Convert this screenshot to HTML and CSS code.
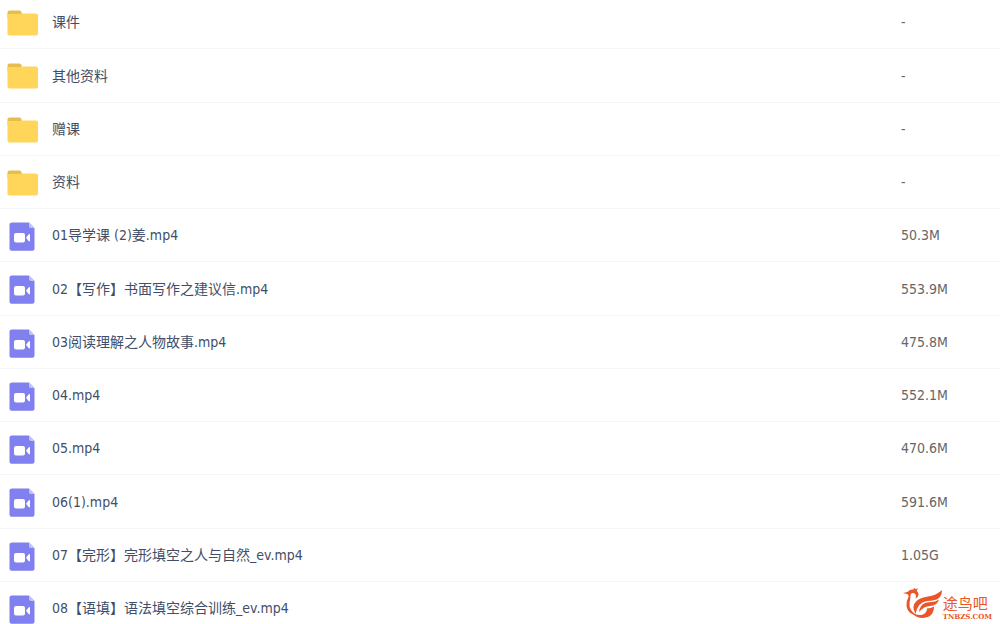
FILE: index.html
```html
<!DOCTYPE html>
<html lang="zh-CN">
<head>
<meta charset="utf-8">
<meta name="viewport" content="width=device-width, initial-scale=1">
<title>文件列表</title>
<link rel="stylesheet" href="styles.css">
</head>
<body>
<svg class="sprite" aria-hidden="true">
  <symbol id="folder" viewBox="0 0 32 28">
    <path d="M.5 9V3Q.5 1 2.500 1H12.500Q14 1 14.500 2.500L15.500 9Z" fill="#e6bd50"/>
    <path d="M.5 4.500H14L16 4H29Q31 4 31 6V24Q31 26 29 26H2.500Q.5 26 .5 24Z" fill="#ffd659"/>
  </symbol>
  <symbol id="video" viewBox="0 0 32 28">
    <path d="M5 0H22L27.500 5.500V26Q27.500 28.300 25.500 28.300H4.500Q2.500 28.300 2.500 26V2Q2.500 0 5 0Z" fill="#8080ee"/>
    <path d="M22 0L27.500 5.500H24Q22 5.500 22 3.500Z" fill="#c4c4fa"/>
    <rect x="7" y="10.500" width="11" height="9.500" rx="2" fill="#fff"/>
    <path d="M19 15.200L21.600 12Q23 11 23 12.500V18Q23 19.500 21.600 18.500Z" fill="#fff"/>
  </symbol>
</svg>
<main>
<table class="files">
<tbody>
<tr><td class="name"><div class="file"><svg class="icon"><use href="#folder"/></svg><span>课件</span></div></td><td class="size">-</td></tr>
<tr><td class="name"><div class="file"><svg class="icon"><use href="#folder"/></svg><span>其他资料</span></div></td><td class="size">-</td></tr>
<tr><td class="name"><div class="file"><svg class="icon"><use href="#folder"/></svg><span>赠课</span></div></td><td class="size">-</td></tr>
<tr><td class="name"><div class="file"><svg class="icon"><use href="#folder"/></svg><span>资料</span></div></td><td class="size">-</td></tr>
<tr><td class="name"><div class="file"><svg class="icon"><use href="#video"/></svg><span>01导学课 (2)姜.mp4</span></div></td><td class="size">50.3M</td></tr>
<tr><td class="name"><div class="file"><svg class="icon"><use href="#video"/></svg><span>02【写作】书面写作之建议信.mp4</span></div></td><td class="size">553.9M</td></tr>
<tr><td class="name"><div class="file"><svg class="icon"><use href="#video"/></svg><span>03阅读理解之人物故事.mp4</span></div></td><td class="size">475.8M</td></tr>
<tr><td class="name"><div class="file"><svg class="icon"><use href="#video"/></svg><span>04.mp4</span></div></td><td class="size">552.1M</td></tr>
<tr><td class="name"><div class="file"><svg class="icon"><use href="#video"/></svg><span>05.mp4</span></div></td><td class="size">470.6M</td></tr>
<tr><td class="name"><div class="file"><svg class="icon"><use href="#video"/></svg><span>06(1).mp4</span></div></td><td class="size">591.6M</td></tr>
<tr><td class="name"><div class="file"><svg class="icon"><use href="#video"/></svg><span>07【完形】完形填空之人与自然_ev.mp4</span></div></td><td class="size">1.05G</td></tr>
<tr><td class="name"><div class="file"><svg class="icon"><use href="#video"/></svg><span>08【语填】语法填空综合训练_ev.mp4</span></div></td><td class="size"></td></tr>
</tbody>
</table>
</main>
<div class="brand">
  <svg class="bird" viewBox="0 0 40 32" aria-hidden="true">
    <path d="M0 5L4.500 4Q6.500 1 10 1.500Q15 2 15.500 6Q15.500 9 12.500 10.500Q14 6 10.500 5Q7.500 4.500 7.500 8Q7.500 11 6.500 15Q5.500 23 15 28Q4.500 26 3.500 18Q3 13 5.500 9Q6 6.500 4 6Z" fill="#e9562a"/>
    <path d="M10 1.500L11.500 0L12.500 1L15 .5L13.500 3Z" fill="#e9562a"/>
    <path d="M12.500 26Q8 18 13.500 13Q17 9.500 25 8.500Q33 7.500 39 2Q39 10 32 12Q28 13 24 13Q15 14 12.500 26Z" fill="#e9562a"/>
    <path d="M36 11.500Q34 18 27 18Q21 18 16 24Q17 17 22 15Q25 14 29 14Q33 13.500 36 11.500Z" fill="#e9562a"/>
    <path d="M31 18.500Q31 29 20 30Q13 30 9 25Q15 28 20 26.500Q24 24.500 24 20.500Q28 20.500 31 18.500Z" fill="#e9562a"/>
  </svg>
  <div class="brand-text"><span class="brand-name">途鸟吧</span><span class="brand-url">TNBZS.COM</span></div>
</div>
</body>
</html>
```
FILE: styles.css
```css
body {
  margin: 0;
  height: 100vh;
  overflow: hidden;
  background: #fff;
  color: #424e67;
  font: 14px/20px "DejaVu Sans Condensed", "Noto Sans CJK SC", sans-serif;
}

.sprite {
  position: absolute;
  width: 0;
  height: 0;
}

.files {
  width: 100%;
  margin-top: -4px;
  border-collapse: separate;
  border-spacing: 0;
}

.files td {
  box-sizing: border-box;
  height: 53px;
  padding: 0;
  border-bottom: 1px solid #f3f5f9;
}

.files tr:nth-child(4n + 2) td {
  height: 54px;
}

.files .name {
  padding-left: 7px;
}

.files .size {
  width: 99px;
  color: #666;
}

.file {
  display: flex;
  align-items: center;
  gap: 13px;
}

.icon {
  flex: none;
  width: 32px;
  height: 29px;
  margin-top: 2px;
}

.brand {
  position: absolute;
  right: 8px;
  bottom: 4px;
  display: flex;
  align-items: flex-end;
  color: #e9562a;
}

.bird {
  width: 40px;
  height: 32px;
}

.brand-text {
  display: flex;
  flex-direction: column;
}

.brand-name {
  font: 15px/20px "Noto Sans CJK SC", sans-serif;
}

.brand-url {
  font: bold 7px/7px "DejaVu Serif", serif;
}
```
